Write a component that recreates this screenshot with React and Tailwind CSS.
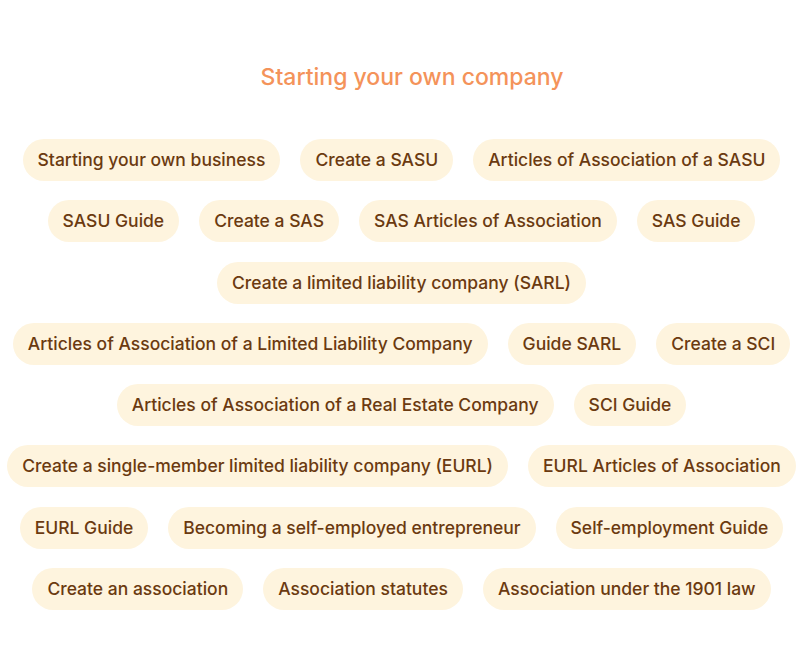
import React from "react";

const rows = [
  "Starting your own business",
  "Create a SASU",
  "Articles of Association of a SASU",
  "SASU Guide",
  "Create a SAS",
  "SAS Articles of Association",
  "SAS Guide",
  "Create a limited liability company (SARL)",
  "Articles of Association of a Limited Liability Company",
  "Guide SARL",
  "Create a SCI",
  "Articles of Association of a Real Estate Company",
  "SCI Guide",
  "Create a single-member limited liability company (EURL)",
  "EURL Articles of Association",
  "EURL Guide",
  "Becoming a self-employed entrepreneur",
  "Self-employment Guide",
  "Create an association",
  "Association statutes",
  "Association under the 1901 law",
];

export default function App() {
  return (
    <div className="min-h-[657px] w-[810px] bg-white" style={{ fontFamily: "Inter, 'Noto Sans', sans-serif" }}>
      <div className="pt-[61px] pl-[14px] text-center">
        <h2 className="text-[23px] leading-[32px] font-medium text-[#f4935a]">Starting your own company</h2>
      </div>
      <div className="mt-[46px] pr-[7px] flex flex-wrap justify-center gap-x-5 gap-y-[19.3px]">
        {rows.map((t) => (
          <a key={t} className="rounded-full bg-[#fef4de] px-[15px] py-2 text-[17.5px] leading-[26px] font-medium text-[#6b3a10]">
            {t}
          </a>
        ))}
      </div>
    </div>
  );
}
